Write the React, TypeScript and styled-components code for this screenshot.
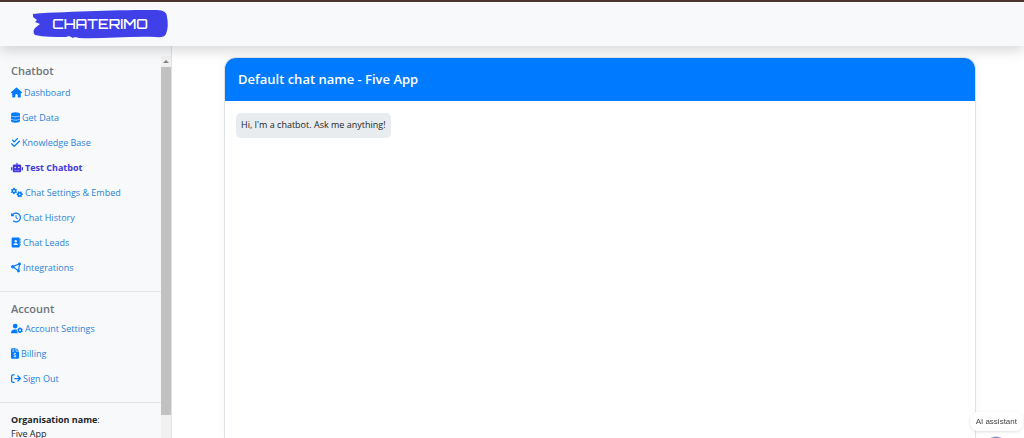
import React from "react";
import styled, { createGlobalStyle } from "styled-components";
import {
  FaHouse,
  FaDatabase,
  FaCheckDouble,
  FaRobot,
  FaGears,
  FaClockRotateLeft,
  FaAddressBook,
  FaUserGear,
  FaFileInvoiceDollar,
  FaArrowRightFromBracket,
} from "react-icons/fa6";

const GlobalStyle = createGlobalStyle`
  * { box-sizing: border-box; }
  body {
    margin: 0;
    background: #fff;
    color: #212529;
    font-family: "Segoe UI", "Open Sans", "Noto Sans", sans-serif;
    font-size: 9px;
    line-height: 14px;
  }
`;

const Page = styled.div`
  display: flex;
  flex-direction: column;
  height: 100vh;
  overflow: hidden;
`;

const Header = styled.header`
  position: relative;
  z-index: 1;
  flex: none;
  display: flex;
  align-items: center;
  height: 46px;
  padding: 0 32px;
  background: #f8f9fa;
  border-top: 2px solid #4e342e;
  box-shadow: 0 5px 12px rgba(0, 0, 0, 0.15);
`;

const HomeLink = styled.a`
  display: flex;
`;

const Body = styled.div`
  flex: 1;
  display: flex;
  min-height: 0;
`;

const Sidebar = styled.aside`
  flex: none;
  display: flex;
  width: 172px;
  background: #f8f9fa;
  border-right: 1px solid #dee2e6;
`;

const SidebarContent = styled.div`
  flex: 1;
  min-width: 0;
  overflow: hidden;
  padding-top: 18px;
`;

const ScrollTrack = styled.div`
  flex: none;
  display: flex;
  flex-direction: column;
  align-items: center;
  width: 10px;
  margin-top: 10px;
  background: #f1f1f1;
`;

const ScrollUp = styled.svg`
  flex: none;
  width: 10px;
  height: 11px;
  fill: #858585;
`;

const ScrollThumb = styled.div`
  width: 100%;
  height: 91%;
  background: #c1c1c1;
`;

const Section = styled.nav<{ $titleGap: number }>`
  display: flex;
  flex-direction: column;
  gap: ${(p) => p.$titleGap}px;
  padding: 0 11px 11px;
  margin-bottom: 10px;
  border-bottom: 1px solid #e3e6e9;
`;

const SectionTitle = styled.h2`
  margin: 0;
  font-size: 11px;
  line-height: 14px;
  font-weight: 600;
  color: #6c757d;
`;

const NavList = styled.ul`
  margin: 0;
  padding: 0;
  list-style: none;
`;

const NavLink = styled.a<{ $active?: boolean; $iconWidth: number }>`
  display: flex;
  align-items: center;
  gap: 2px;
  height: 25px;
  white-space: nowrap;
  text-decoration: none;
  color: ${(p) => (p.$active ? "#4338e0" : "#2a83d8")};
  font-weight: ${(p) => (p.$active ? 700 : 400)};

  svg {
    flex: none;
    width: ${(p) => p.$iconWidth}px;
    height: 11px;
    color: ${(p) => (p.$active ? "#4338e0" : "#007bff")};
  }
`;

const Organisation = styled.p`
  margin: 0;
  padding: 0 11px;
`;

const Main = styled.main`
  flex: 1;
  display: flex;
  min-width: 0;
  padding: 11px 48px 0 52px;
`;

const ChatCard = styled.section`
  flex: 1;
  min-width: 0;
  border: 1px solid #dee2e6;
  border-bottom: 0;
  border-radius: 12px 12px 0 0;
  overflow: hidden;
  box-shadow: 0 0 12px rgba(0, 0, 0, 0.04);
`;

const ChatHeader = styled.h1`
  margin: 0;
  padding: 12px 13px;
  background: #007bff;
  color: #fff;
  font-size: 13px;
  line-height: 19px;
  font-weight: 600;
`;

const Messages = styled.div`
  padding: 12px 11px;
`;

const Bubble = styled.p`
  width: fit-content;
  margin: 0;
  padding: 5px 5px 6px;
  border-radius: 5px;
  background: #e9ecef;
`;

const AssistantButton = styled.button`
  position: fixed;
  right: 1px;
  bottom: 7px;
  padding: 3px 6px;
  border: 0;
  border-radius: 8px;
  background: #fff;
  box-shadow: 0 1px 3px rgba(0, 0, 0, 0.12);
  color: #444;
  font: 8px/13px "Liberation Sans", Arial, sans-serif;
`;

const AssistantAvatar = styled.svg`
  position: fixed;
  right: 22px;
  bottom: 0;
`;

function Logo() {
  return (
    <svg width="137" height="31" viewBox="0 0 137 31" role="img" aria-label="Chaterimo">
      <path
        fill="#4040e8"
        d="M1 5 C20 3 44 3 64 2 S108 1 125 1 Q135 1 135 8 Q137 17 134 25 Q132 29 124 28 C96 27 70 30 47 29 L43 28 L41 29 L37 27 L34 28 C22 28 12 28 3 26 Q0 23 3 19 L8 15 L3 13 L5 11 L1 8 Z"
      />
      <text
        x="68"
        y="20"
        textAnchor="middle"
        fill="#fff"
        fontFamily="Orbitron, 'DejaVu Sans', sans-serif"
        fontSize="14"
        fontWeight="500"
      >
        CHATERIMO
      </text>
    </svg>
  );
}

function NodesIcon() {
  return (
    <svg viewBox="0 0 20 20" aria-hidden="true">
      <path
        d="M3 8 L17 3 L15 17 Z"
        fill="none"
        stroke="currentColor"
        strokeWidth="2.4"
      />
      <g fill="currentColor">
        <circle cx="3.5" cy="8.5" r="3.3" />
        <circle cx="17" cy="3" r="2.8" />
        <circle cx="15" cy="17" r="2.8" />
      </g>
    </svg>
  );
}

type NavItem = {
  label: string;
  icon: React.ComponentType;
  iconWidth: number;
  active?: boolean;
};

const chatbotLinks: NavItem[] = [
  { label: "Dashboard", icon: FaHouse, iconWidth: 11 },
  { label: "Get Data", icon: FaDatabase, iconWidth: 9 },
  { label: "Knowledge Base", icon: FaCheckDouble, iconWidth: 9 },
  { label: "Test Chatbot", icon: FaRobot, iconWidth: 12, active: true },
  { label: "Chat Settings & Embed", icon: FaGears, iconWidth: 12 },
  { label: "Chat History", icon: FaClockRotateLeft, iconWidth: 10 },
  { label: "Chat Leads", icon: FaAddressBook, iconWidth: 10 },
  { label: "Integrations", icon: NodesIcon, iconWidth: 10 },
];

const accountLinks: NavItem[] = [
  { label: "Account Settings", icon: FaUserGear, iconWidth: 12 },
  { label: "Billing", icon: FaFileInvoiceDollar, iconWidth: 8 },
  { label: "Sign Out", icon: FaArrowRightFromBracket, iconWidth: 10 },
];

type NavSectionProps = { title: string; links: NavItem[]; titleGap?: number };

function NavSection({ title, links, titleGap = 0 }: NavSectionProps) {
  return (
    <Section aria-label={title} $titleGap={titleGap}>
      <SectionTitle>{title}</SectionTitle>
      <NavList>
        {links.map(({ label, icon: Icon, iconWidth, active }) => (
          <li key={label}>
            <NavLink
              href="#"
              $active={active}
              $iconWidth={iconWidth}
              aria-current={active ? "page" : undefined}
            >
              <Icon />
              {label}
            </NavLink>
          </li>
        ))}
      </NavList>
    </Section>
  );
}

export default function App() {
  return (
    <Page>
      <GlobalStyle />
      <Header>
        <HomeLink href="#">
          <Logo />
        </HomeLink>
      </Header>
      <Body>
        <Sidebar>
          <SidebarContent>
            <NavSection title="Chatbot" links={chatbotLinks} titleGap={2} />
            <NavSection title="Account" links={accountLinks} />
            <Organisation>
              <strong>Organisation name</strong>:<br />
              Five App
            </Organisation>
          </SidebarContent>
          <ScrollTrack aria-hidden="true">
            <ScrollUp viewBox="0 0 10 11">
              <path d="M2 7 L5 4 L8 7 Z" />
            </ScrollUp>
            <ScrollThumb />
          </ScrollTrack>
        </Sidebar>
        <Main>
          <ChatCard>
            <ChatHeader>Default chat name - Five App</ChatHeader>
            <Messages>
              <Bubble>Hi, I'm a chatbot. Ask me anything!</Bubble>
            </Messages>
          </ChatCard>
        </Main>
      </Body>
      <AssistantAvatar width="12" height="2" viewBox="0 0 12 2" aria-hidden="true">
        <path d="M0 2 Q6 -1 12 2 Z" fill="#8b98c4" />
      </AssistantAvatar>
      <AssistantButton type="button">AI assistant</AssistantButton>
    </Page>
  );
}
